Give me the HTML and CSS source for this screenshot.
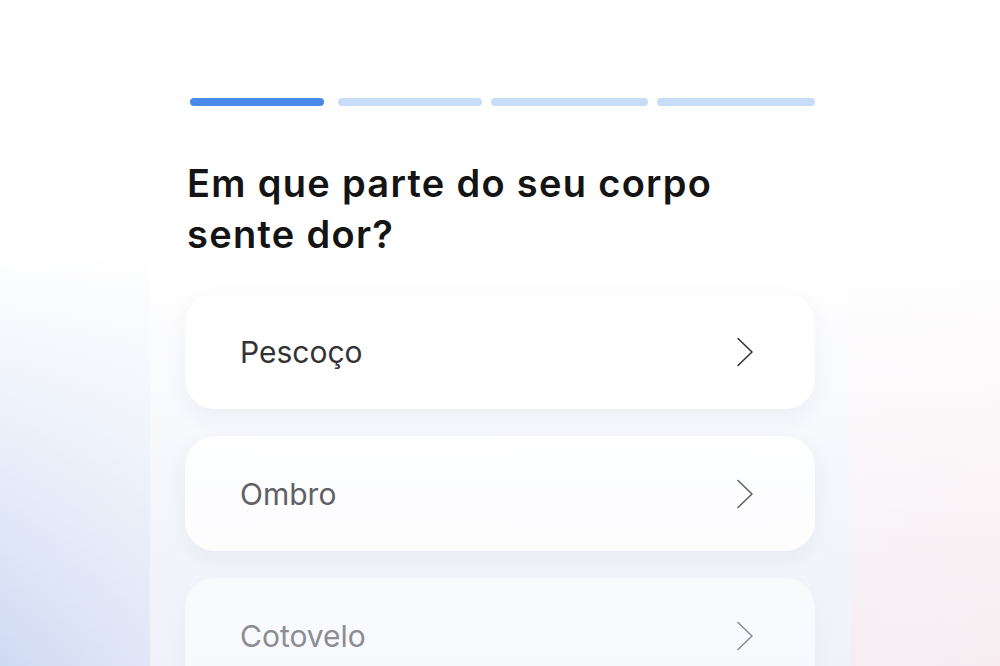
FILE: index.html
```html
<!DOCTYPE html>
<html lang="pt">
<head>
<meta charset="utf-8">
<title>Em que parte do seu corpo sente dor?</title>
<link rel="stylesheet" href="styles.css">
</head>
<body>
<div class="stage">
  <main class="panel">
    <div class="progress">
      <span class="seg seg-active s1"></span>
      <span class="seg s2"></span>
      <span class="seg s3"></span>
      <span class="seg s4"></span>
    </div>
    <h1 class="title">Em que parte do seu corpo<br>sente dor?</h1>
    <ul class="options">
      <li class="option o1"><span class="label">Pescoço</span>
        <svg class="chev" viewBox="0 0 18 30" width="18" height="30"><path d="M2 1.5 L16 15 L2 28.5" fill="none" stroke="currentColor" stroke-width="1.6" stroke-linecap="round" stroke-linejoin="round"/></svg>
      </li>
      <li class="option o2"><span class="label">Ombro</span>
        <svg class="chev" viewBox="0 0 18 30" width="18" height="30"><path d="M2 1.5 L16 15 L2 28.5" fill="none" stroke="currentColor" stroke-width="1.6" stroke-linecap="round" stroke-linejoin="round"/></svg>
      </li>
      <li class="option o3"><span class="label">Cotovelo</span>
        <svg class="chev" viewBox="0 0 18 30" width="18" height="30"><path d="M2 1.5 L16 15 L2 28.5" fill="none" stroke="currentColor" stroke-width="1.6" stroke-linecap="round" stroke-linejoin="round"/></svg>
      </li>
    </ul>
  </main>
</div>
</body>
</html>
```
FILE: styles.css
```css
html, body {
  margin: 0;
  padding: 0;
  height: 100%;
  overflow: hidden;
}
body {
  font-family: Inter, "Noto Sans", "Liberation Sans", sans-serif;
  background:
    linear-gradient(to bottom, #ffffff 0%, #ffffff 38%, rgba(255,255,255,0) 100%),
    linear-gradient(to right, #cfdaf4 0%, #e4e9f7 18%, #f1f0f8 60%, #f7edf1 100%);
}
.stage {
  display: flex;
  justify-content: center;
  height: 666px;
}
.panel {
  width: 700px;
  box-sizing: border-box;
  padding: 98px 35px 0 35px;
  background: linear-gradient(to bottom, #ffffff 0%, #ffffff 40%, #f6f7fc 70%, #f0f2fa 100%);
}
.progress {
  display: flex;
  margin-left: 5px;
  height: 8px;
}
.seg {
  display: block;
  height: 8px;
  border-radius: 4px;
  background: #c7dcf8;
}
.seg-active { background: #4a89e8; }
.s1 { flex: 134 1 0; margin-right: 14px; }
.s2 { flex: 144 1 0; margin-right: 9px; }
.s3 { flex: 157 1 0; margin-right: 9px; }
.s4 { flex: 158 1 0; }
.title {
  margin: 52px 0 0 2px;
  font-size: 38px;
  line-height: 51px;
  font-weight: 600;
  color: #141414;
  letter-spacing: 1.3px;
}
.options {
  list-style: none;
  margin: 34px 0 0 0;
  padding: 0;
  display: flex;
  flex-direction: column;
  gap: 27px;
}
.option {
  height: 115px;
  border-radius: 30px;
  display: flex;
  align-items: center;
  justify-content: space-between;
  padding: 0 61px 0 55px;
  box-shadow: 0 8px 22px rgba(40, 50, 110, 0.06);
}
.label {
  font-size: 30px;
  font-weight: 400;
}
.chev { display: block; }
.o1 { background: #ffffff; color: #333336; }
.o2 { background: rgba(255,255,255,0.8); color: #606066; }
.o3 { background: rgba(255,255,255,0.55); color: #8b8d94; box-shadow: 0 8px 22px rgba(40, 50, 110, 0.03); }
```
